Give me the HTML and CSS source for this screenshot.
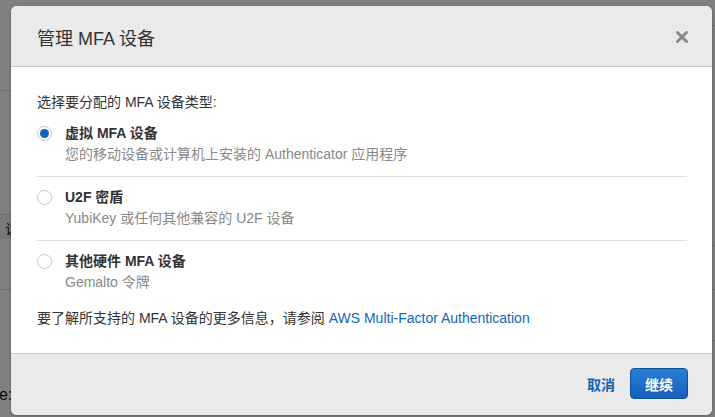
FILE: index.html
```html
<!DOCTYPE html>
<html lang="zh-CN">
<head>
<meta charset="utf-8">
<link rel="stylesheet" href="styles.css">
</head>
<body>
<div class="page">
  <div class="col col-left">
    <div class="row r1"></div>
    <div class="row r2"></div>
    <div class="row r3"><span class="bgtext">访</span></div>
    <div class="row r4"></div>
    <div class="row r5"><span class="bgtext bgtext2">e:</span></div>
  </div>
  <div class="col col-right">
    <div class="row q1"></div>
    <div class="row q2"></div>
    <div class="row q3"></div>
    <div class="row q4"></div>
  </div>
</div>
<div class="backdrop"></div>
<div class="modal">
  <div class="modal-header">
    <h2 class="modal-title">管理 MFA 设备</h2>
    <svg class="close" width="12" height="12" viewBox="0 0 12 12" aria-label="关闭">
      <path d="M1.5 1.5 L10.5 10.5 M10.5 1.5 L1.5 10.5" stroke="#8a8a8a" stroke-width="3" stroke-linecap="round"/>
    </svg>
  </div>
  <div class="modal-body">
    <p class="prompt">选择要分配的 MFA 设备类型:</p>
    <div class="options">
      <label class="option">
        <span class="radio checked"></span>
        <span class="option-text">
          <span class="option-title">虚拟 MFA 设备</span>
          <span class="option-sub">您的移动设备或计算机上安装的 Authenticator 应用程序</span>
        </span>
      </label>
      <label class="option">
        <span class="radio"></span>
        <span class="option-text">
          <span class="option-title">U2F 密盾</span>
          <span class="option-sub">YubiKey 或任何其他兼容的 U2F 设备</span>
        </span>
      </label>
      <label class="option">
        <span class="radio"></span>
        <span class="option-text">
          <span class="option-title">其他硬件 MFA 设备</span>
          <span class="option-sub">Gemalto 令牌</span>
        </span>
      </label>
    </div>
    <p class="info">要了解所支持的 MFA 设备的更多信息，请参阅 <a class="link" href="#">AWS Multi-Factor Authentication</a></p>
  </div>
  <div class="modal-footer">
    <a class="cancel" href="#">取消</a>
    <button class="btn-primary">继续</button>
  </div>
</div>
</body>
</html>
```

FILE: styles.css
```css
* { box-sizing: border-box; }
html, body { margin: 0; padding: 0; }
body {
  width: 715px;
  height: 417px;
  overflow: hidden;
  background: #fff;
  font-family: "Liberation Sans", Arial, "Noto Sans CJK SC", sans-serif;
  color: #333;
  position: relative;
}
.page {
  display: flex;
  justify-content: space-between;
  height: 417px;
}
.col { display: flex; flex-direction: column; }
.col-left { width: 40px; }
.col-right { width: 40px; }
.row { border-bottom: 1px solid #dcdcdc; position: relative; }
.r1 { height: 91px; }
.r2 { height: 124px; }
.r3 { height: 23px; background: #f4f4f4; }
.r4 { height: 52px; }
.r5 { flex: 1; border-bottom: none; }
.q1 { height: 26px; }
.q2 { height: 220px; }
.q3 { height: 44px; }
.q4 { height: 51px; }
.bgtext {
  position: absolute;
  left: 5px;
  top: 3px;
  font-size: 14px;
  color: #111;
}
.bgtext2 { top: 96px; left: -1px; font-size: 16px; }
.backdrop {
  position: absolute;
  inset: 0;
  background: rgba(0, 0, 0, 0.5);
}
.modal {
  position: absolute;
  left: 11px;
  top: 6px;
  width: 701px;
  height: 409px;
  background: #fff;
  border-radius: 6px;
  display: flex;
  flex-direction: column;
  overflow: hidden;
  box-shadow: 0 1px 3px rgba(0,0,0,0.3);
}
.modal-header {
  height: 61px;
  background: #eaeaea;
  border-bottom: 1px solid #c8c8c8;
  display: flex;
  align-items: center;
  justify-content: space-between;
  padding: 0 24px 0 26px;
  flex-shrink: 0;
}
.modal-title {
  margin: 0;
  font-size: 18px;
  font-weight: normal;
  color: #333;
  padding-top: 2px;
}
.close { display: block; margin-top: 2px; }
.modal-body {
  flex: 1;
  padding: 26px 25px 0 26px;
}
.prompt {
  margin: 0 0 13px;
  font-size: 14px;
  line-height: 18px;
}
.options { display: flex; flex-direction: column; }
.option {
  display: flex;
  align-items: flex-start;
  gap: 13px;
  padding: 11px 0 13px;
  border-bottom: 1px solid #dcdcdc;
}
.option:first-child { padding-top: 0; }
.option:last-child { border-bottom: none; padding-bottom: 0; }
.radio {
  width: 15px;
  height: 15px;
  border-radius: 50%;
  border: 1px solid #c4c4c4;
  background: #fff;
  flex-shrink: 0;
  margin-top: 2px;
  position: relative;
}
.radio.checked::after {
  content: "";
  position: absolute;
  left: 2px;
  top: 2px;
  width: 9px;
  height: 9px;
  border-radius: 50%;
  background: #1560bd;
}
.option-text { display: flex; flex-direction: column; gap: 3px; }
.option-title {
  font-size: 14px;
  font-weight: bold;
  line-height: 18px;
  color: #333;
}
.option-sub {
  font-size: 14px;
  line-height: 18px;
  color: #888;
}
.info {
  margin: 18px 0 0;
  font-size: 14px;
  line-height: 18px;
}
.link { color: #1166bb; text-decoration: none; }
.modal-footer {
  height: 62px;
  flex-shrink: 0;
  background: #eaeaea;
  border-top: 1px solid #c8c8c8;
  display: flex;
  align-items: center;
  justify-content: flex-end;
  gap: 15px;
  padding: 0 24px 2px 0;
}
.cancel {
  color: #1560b0;
  font-weight: bold;
  font-size: 14px;
  text-decoration: none;
}
.btn-primary {
  width: 58px;
  height: 31px;
  border-radius: 4px;
  border: 1px solid #0f4f9c;
  background: linear-gradient(#2a7ed6, #1461bb);
  color: #fff;
  font-weight: bold;
  font-size: 14px;
  font-family: inherit;
  padding: 0;
}
```
